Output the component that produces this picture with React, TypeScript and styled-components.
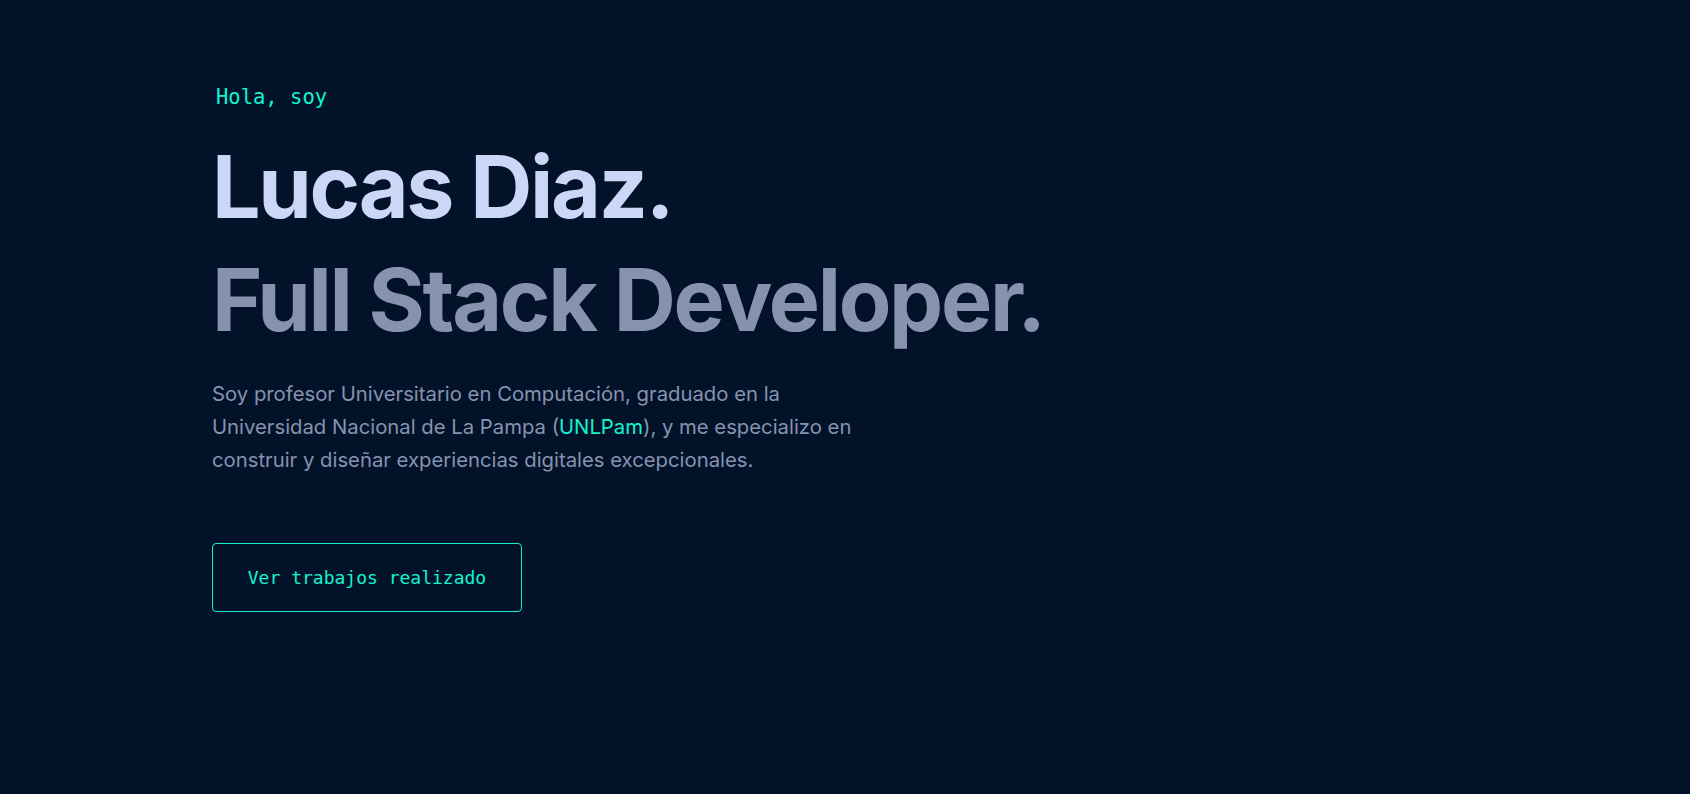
import React from "react";
import styled, { createGlobalStyle } from "styled-components";

const GlobalStyle = createGlobalStyle`
  html, body {
    margin: 0;
    padding: 0;
    background: #011229;
  }
  * { box-sizing: border-box; }
`;

const Page = styled.main`
  min-height: 794px;
  background: #011229;
  padding: 85px 0 0 212px;
`;

const Intro = styled.section`
  display: flex;
  flex-direction: column;
  align-items: flex-start;
`;

const Greeting = styled.h1`
  margin: 0 0 31px 4px;
  font-family: "DejaVu Sans Mono", "Liberation Mono", monospace;
  font-weight: 400;
  font-size: 20.5px;
  line-height: 24px;
  color: #16f2cf;
`;

const BigHeading = styled.h2<{ $muted?: boolean }>`
  margin: ${(p) => (p.$muted ? "19px" : "0")} 0 0 0;
  font-family: Inter, "Liberation Sans", sans-serif;
  font-weight: 700;
  font-size: 86px;
  line-height: 94px;
  letter-spacing: -2.3px;
  color: ${(p) => (p.$muted ? "#8892b0" : "#ccd6f6")};
`;

const Description = styled.p`
  margin: 30px 0 0 0;
  font-family: Inter, "Liberation Sans", sans-serif;
  font-size: 20.3px;
  line-height: 33px;
  color: #8892b0;
`;

const Highlight = styled.span`
  color: #16f2cf;
`;

const OutlineButton = styled.a`
  margin-top: 67px;
  display: inline-flex;
  align-items: center;
  justify-content: center;
  width: 310px;
  height: 69px;
  border: 1px solid #16f2cf;
  border-radius: 4px;
  font-family: "DejaVu Sans Mono", "Liberation Mono", monospace;
  font-size: 18px;
  color: #16f2cf;
  text-decoration: none;
`;

export default function App() {
  return (
    <>
      <GlobalStyle />
      <Page>
        <Intro>
          <Greeting>Hola, soy</Greeting>
          <BigHeading>Lucas Diaz.</BigHeading>
          <BigHeading $muted>Full Stack Developer.</BigHeading>
          <Description>
            Soy profesor Universitario en Computación, graduado en la
            <br />
            Universidad Nacional de La Pampa (<Highlight>UNLPam</Highlight>), y me especializo en
            <br />
            construir y diseñar experiencias digitales excepcionales.
          </Description>
          <OutlineButton href="#">Ver trabajos realizado</OutlineButton>
        </Intro>
      </Page>
    </>
  );
}
